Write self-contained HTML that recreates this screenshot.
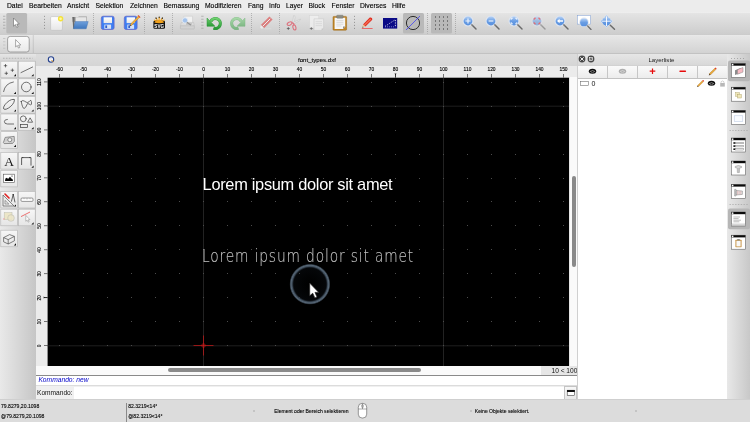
<!DOCTYPE html>
<html lang="de">
<head>
<meta charset="utf-8">
<title>font_types.dxf</title>
<style>
*{box-sizing:border-box;margin:0;padding:0}
html,body{width:750px;height:422px;overflow:hidden;background:#dcdcdc;font-family:"Liberation Sans",sans-serif;-webkit-text-size-adjust:none}
#app{will-change:transform;position:absolute;left:0;top:0;width:750px;height:422px;overflow:hidden;background:#d8d8d8}
.a{position:absolute}
#menubar{position:absolute;left:0;top:0;width:750px;height:12px;background:#ececec}
#menubar span{position:absolute;top:1.3px;font-size:6.75px;line-height:9px;color:#000;-webkit-text-stroke:0.12px #000;white-space:nowrap}
#tb1{position:absolute;left:0;top:12px;width:750px;height:23px;background:linear-gradient(#f6f6f6 0,#e5e5e5 1px,#e3e3e3 2px,#cdcdcd 22px,#cacaca 23px)}
#tb2{position:absolute;left:0;top:35px;width:750px;height:18px;background:linear-gradient(#eaeaea 0,#e6e6e6 1px,#d4d4d4 17px,#d2d2d2 18px)}
#tbline{position:absolute;left:0;top:53px;width:750px;height:1px;background:#c2c2c2}
#left{position:absolute;left:0;top:54px;width:36px;height:346px;background:linear-gradient(90deg,#e9e9e9,#c6c6c6)}
#lefthandle{position:absolute;left:0;top:54px;width:36px;height:7px;background:linear-gradient(#e6e6e6,#d4d4d4)}
.tb{position:absolute;width:16.5px;height:16.5px;background:linear-gradient(#f6f6f6,#e6e6e6);border:0.5px solid #bdbdbd}
#ctitle{position:absolute;left:36px;top:54px;width:541px;height:11.5px;background:linear-gradient(#dcdcdc,#d5d5d5)}
#ctitle span{position:absolute;left:262px;top:2px;font-size:6.1px;line-height:7px;color:#000;-webkit-text-stroke:0.1px #000;white-space:nowrap}
#rulert{position:absolute;left:36px;top:65.5px;width:541px;height:12px;background:#ebebeb}
#rulerl{position:absolute;left:36px;top:77px;width:12px;height:298px;background:#ebebeb}
#canvas{position:absolute;left:47.5px;top:77.5px;width:521.5px;height:288.5px;background:#000;overflow:hidden}
.rt{position:absolute;top:1.2px;width:24px;margin-left:-12px;text-align:center;font-size:4.9px;line-height:6px;color:#000;-webkit-text-stroke:0.12px #000;white-space:nowrap}
.rl{position:absolute;left:0.5px;width:6px;height:16px;margin-top:-8px;font-size:5.3px;line-height:6px;color:#222;white-space:nowrap;writing-mode:vertical-rl;transform:rotate(180deg);text-align:center}
#vs{position:absolute;left:569px;top:77px;width:8px;height:289px;background:#fafafa;border-left:0.5px solid #e4e4e4}
#hs{position:absolute;left:36px;top:366px;width:541px;height:8.5px;background:#fafafa}
#cmdline1{position:absolute;left:36px;top:374.5px;width:541px;height:11px;background:#fff;border-top:1px solid #8a8a8a}
#cmdline1 span{position:absolute;left:2.4px;top:0.4px;font-size:6.7px;line-height:8px;color:#0000c8;font-style:italic;white-space:nowrap}
#cmdline2{position:absolute;left:36px;top:385px;width:541px;height:14px;background:#f0f0f0;border-top:1px solid #dcdcdc}
#status{position:absolute;left:0;top:399px;width:750px;height:23px;background:#dcdcdc;border-top:1px solid #cfcfcf}
.st{position:absolute;font-size:5.1px;line-height:6px;color:#000;-webkit-text-stroke:0.1px #000;white-space:nowrap}
#layer{position:absolute;left:577px;top:54px;width:150px;height:346px;background:#fff;border-left:1px solid #d0d0d0}
#ltitle{position:absolute;left:0;top:0;width:150px;height:11px;background:linear-gradient(#e6e6e6,#d8d8d8)}
#ltitle span{position:absolute;left:70.4px;top:1.7px;font-size:6.1px;line-height:8px;color:#222}
#lbtns{position:absolute;left:0;top:11px;width:150px;height:14px;background:linear-gradient(#fafafa,#ececec);border-top:1px solid #d2d2d2;border-bottom:1px solid #c2c2c2}
.lsep{position:absolute;top:0;width:1px;height:12px;background:#c6c6c6}
#right{position:absolute;left:727px;top:54px;width:23px;height:346px;background:linear-gradient(90deg,#e8e8e8,#c8c8c8)}
.hd{position:absolute;background:#a8a8a8;width:2.5px;height:0.8px}
.dot{position:absolute;width:1px;border-left:1px dotted #555}
.sel{position:absolute;background:#bababa;border-radius:1.5px}
svg{position:absolute;overflow:visible}
</style>
</head>
<body>
<div id="app">
<div id="menubar"><span style="left:7px">Datei</span><span style="left:29px">Bearbeiten</span><span style="left:67px">Ansicht</span><span style="left:95.6px">Selektion</span><span style="left:130px">Zeichnen</span><span style="left:163.6px">Bemassung</span><span style="left:205px">Modifizieren</span><span style="left:248px">Fang</span><span style="left:269px">Info</span><span style="left:286px">Layer</span><span style="left:308.6px">Block</span><span style="left:331.6px">Fenster</span><span style="left:360px">Diverses</span><span style="left:392px">Hilfe</span></div>
<div id="tb1"></div><div id="tb2"></div><div id="tbline"></div>
<svg class="a" style="left:0;top:0" width="750" height="54" viewBox="0 0 750 54">
<defs>
<linearGradient id="gBlue" x1="0" y1="0" x2="0" y2="1"><stop offset="0" stop-color="#b4d0f4"/><stop offset="0.5" stop-color="#6a9ee4"/><stop offset="1" stop-color="#5890de"/></linearGradient>
<linearGradient id="gFold" x1="0" y1="0" x2="0" y2="1"><stop offset="0" stop-color="#6fa0dc"/><stop offset="1" stop-color="#3d76be"/></linearGradient>
<linearGradient id="gGreen" x1="0" y1="0" x2="0" y2="1"><stop offset="0" stop-color="#6ed06e"/><stop offset="1" stop-color="#2a9a38"/></linearGradient>
<linearGradient id="gPage" x1="0" y1="0" x2="0" y2="1"><stop offset="0" stop-color="#ffffff"/><stop offset="1" stop-color="#e6e6e6"/></linearGradient>
<linearGradient id="gBtn" x1="0" y1="0" x2="0" y2="1"><stop offset="0" stop-color="#fbfbfb"/><stop offset="1" stop-color="#e9e9e9"/></linearGradient>
<g id="lens"><circle cx="0" cy="0" r="5.5" fill="#dde5f0" opacity="0.95"/><circle cx="0" cy="0" r="4.4" fill="url(#gBlue)"/><path d="M4 4 L8 8" stroke="#6a6a6a" stroke-width="1.45" stroke-linecap="round"/><path d="M3.2 3.2 L4.4 4.4" stroke="#9a9a9a" stroke-width="1.2"/></g>
<g id="arrowcur"><path d="M0 0 L0 8.2 L1.9 6.5 L3.2 9.4 L4.6 8.8 L3.3 6 L5.8 6 Z" fill="#fff" stroke="#666" stroke-width="0.6" stroke-linejoin="round"/></g>
</defs>
<rect x="3" y="15.799999999999999" width="2.4" height="0.8" fill="#a6a6a6"/><rect x="3" y="18.8" width="2.4" height="0.8" fill="#a6a6a6"/><rect x="3" y="21.8" width="2.4" height="0.8" fill="#a6a6a6"/><rect x="3" y="24.8" width="2.4" height="0.8" fill="#a6a6a6"/><rect x="3" y="27.8" width="2.4" height="0.8" fill="#a6a6a6"/><rect x="6.3" y="13" width="20.8" height="20.5" rx="1.5" fill="#b9b9b9"/><use href="#arrowcur" x="13.5" y="18"/><circle cx="44.5" cy="16.3" r="0.45" fill="#4a4a4a"/><circle cx="44.5" cy="19.3" r="0.45" fill="#4a4a4a"/><circle cx="44.5" cy="22.3" r="0.45" fill="#4a4a4a"/><circle cx="44.5" cy="25.3" r="0.45" fill="#4a4a4a"/><circle cx="44.5" cy="28.3" r="0.45" fill="#4a4a4a"/><rect x="50.6" y="16.6" width="11.8" height="13.8" rx="1.2" fill="url(#gPage)" stroke="#bcbcbc" stroke-width="0.6"/><circle cx="60.6" cy="18.8" r="2.7" fill="#f4e23a"/><circle cx="60.6" cy="18.8" r="1.3" fill="#fff7a0"/><path d="M72.6 17 L78 17 L79 16.4 L86.8 16.4 L86.8 22 L72.6 22 Z" fill="#9a9a9a"/><path d="M75.6 17.2 L86.3 17.2 L86.3 22 L75.6 22 Z" fill="#e6e6e6"/><path d="M72.4 17 L74.4 17 L74.6 28.6 L73.2 28.6 Z" fill="#6a6a6a"/><path d="M75.2 21.6 L88.2 21.6 L86.2 28.8 L73.4 28.8 Z" fill="url(#gFold)" stroke="#3b6cae" stroke-width="0.4"/><line x1="93.5" y1="13" x2="93.5" y2="33.5" stroke="#8a8a8a" stroke-width="0.55" stroke-dasharray="1 1"/><rect x="101.3" y="16.2" width="12.8" height="13.3" rx="1.8" fill="#3d7df2" stroke="#6464c4" stroke-width="0.7"/><rect x="103.6" y="17.3" width="8.4" height="5.8" fill="url(#gPage)"/><rect x="104.3" y="24.6" width="6.8" height="4.2" fill="#d8e2f4"/><rect x="105.3" y="25.4" width="1.8" height="2.6" fill="#2f5fd0"/><rect x="124.3" y="16.2" width="12.8" height="13.3" rx="1.8" fill="#3d7df2" stroke="#6464c4" stroke-width="0.7"/><rect x="126.6" y="17.3" width="8.4" height="5.8" fill="url(#gPage)"/><rect x="127.3" y="24.6" width="6.8" height="4.2" fill="#d8e2f4"/><rect x="128.3" y="25.4" width="1.8" height="2.6" fill="#2f5fd0"/><path d="M138.6 15.8 L139.8 17 L131.4 25.6 L130.2 24.4 Z" fill="#f2b23a" stroke="#b06a14" stroke-width="0.4"/><path d="M130.2 24.4 L131.4 25.6 L129.4 26.4 Z" fill="#444"/><path d="M138 15.4 L140.2 17.6" stroke="#e05a3a" stroke-width="1.1"/><line x1="144.5" y1="13" x2="144.5" y2="33.5" stroke="#8a8a8a" stroke-width="0.55" stroke-dasharray="1 1"/><path d="M153.4 22 Q153.4 20.4 155 20.4 L163.4 20.4 Q165 20.4 165 22 L165 27.6 Q165 28.8 163.6 28.8 L154.8 28.8 Q153.4 28.8 153.4 27.6 Z" fill="#101010"/><path d="M154.2 22.6 Q159.2 16.6 164.2 22.6 Q159.2 24 154.2 22.6Z" fill="#f2a21c"/><path d="M159.2 17.4 L159.2 19 M156.2 18.4 L157 19.6 M162.2 18.4 L161.4 19.6 M154.4 20.2 L155.6 21 M164 20.2 L162.8 21" stroke="#f2a21c" stroke-width="1.2" stroke-linecap="round"/><path d="M159.2 17 L159.2 17.3 M156 18 L156.2 18.3 M162.4 18 L162.2 18.3" stroke="#222" stroke-width="1.2" stroke-linecap="round"/><text x="159.2" y="28" font-family="Liberation Sans, sans-serif" font-weight="bold" font-size="4.6" fill="#fff" text-anchor="middle">SVG</text><line x1="172.5" y1="13" x2="172.5" y2="33.5" stroke="#8a8a8a" stroke-width="0.55" stroke-dasharray="1 1"/><g opacity="0.9"><path d="M183.8 16.2 L192.6 16.2 L192.6 23 L183.8 23 Z" fill="#f4f4f4" stroke="#c0c0c0" stroke-width="0.5"/><path d="M181.4 22.4 L193.6 22.4 L194.4 26 L180.4 26 Z" fill="#dcdcdc" stroke="#b0b0b0" stroke-width="0.4"/><path d="M186 24 L192 24" stroke="#9a9a9a" stroke-width="0.7"/><rect x="180.4" y="25.8" width="14" height="3.2" rx="0.6" fill="#d2d2d2" stroke="#a8a8a8" stroke-width="0.4"/><circle cx="185" cy="20.4" r="2.7" fill="#9cc0ee" stroke="#e4ecf6" stroke-width="0.9"/><path d="M187.2 22.4 L190.4 24.8" stroke="#8c8c8c" stroke-width="1.2" stroke-linecap="round"/></g><rect x="201.2" y="15.799999999999999" width="2.4" height="0.8" fill="#a6a6a6"/><rect x="201.2" y="18.8" width="2.4" height="0.8" fill="#a6a6a6"/><rect x="201.2" y="21.8" width="2.4" height="0.8" fill="#a6a6a6"/><rect x="201.2" y="24.8" width="2.4" height="0.8" fill="#a6a6a6"/><rect x="201.2" y="27.8" width="2.4" height="0.8" fill="#a6a6a6"/><g transform="" opacity="1.0"><path d="M210.8 21.4 A5 5 0 1 1 213.6 28.2" fill="none" stroke="#2c9638" stroke-width="3.1"/><path d="M210.8 21.4 A5 5 0 1 1 213.6 28.2" fill="none" stroke="url(#gGreen)" stroke-width="2.3"/><path d="M207 18 L207 26.3 L215 26.3 Z" fill="url(#gGreen)" stroke="#2c9638" stroke-width="0.5" stroke-linejoin="round"/></g><g transform="translate(452 0) scale(-1 1)" opacity="0.5"><path d="M210.8 21.4 A5 5 0 1 1 213.6 28.2" fill="none" stroke="#2c9638" stroke-width="3.1"/><path d="M210.8 21.4 A5 5 0 1 1 213.6 28.2" fill="none" stroke="url(#gGreen)" stroke-width="2.3"/><path d="M207 18 L207 26.3 L215 26.3 Z" fill="url(#gGreen)" stroke="#2c9638" stroke-width="0.5" stroke-linejoin="round"/></g><line x1="251.5" y1="13" x2="251.5" y2="33.5" stroke="#8a8a8a" stroke-width="0.55" stroke-dasharray="1 1"/><g opacity="0.62"><path d="M269.4 16.4 L272.6 19.6 L264 28.2 L260.8 25 Z" fill="#dc4848"/><path d="M270.2 18.8 L262.6 26.4" stroke="#fff" stroke-width="1"/><path d="M260.8 25 L264 28.2 L261.6 29 L260 27.4 Z" fill="#fafafa" stroke="#d0d0d0" stroke-width="0.3"/><path d="M264.6 28.8 L271.4 28.8" stroke="#e4e4e4" stroke-width="0.8"/></g><line x1="279.5" y1="13" x2="279.5" y2="33.5" stroke="#8a8a8a" stroke-width="0.55" stroke-dasharray="1 1"/><g opacity="0.62"><path d="M293.6 15.6 Q295.2 15 295 17.6 L294 24 L292.6 22.8 Z" fill="#f4f4f4" stroke="#aaa" stroke-width="0.5"/><path d="M300.4 19 Q300.8 20.4 299 21 L293.4 24 L293 22.6 Z" fill="#f4f4f4" stroke="#aaa" stroke-width="0.5"/><ellipse cx="289.6" cy="23.6" rx="2.6" ry="1.5" transform="rotate(-28 289.6 23.6)" fill="none" stroke="#e0364a" stroke-width="1.1"/><ellipse cx="294.4" cy="27.4" rx="1.5" ry="2.6" transform="rotate(-12 294.4 27.4)" fill="none" stroke="#e0364a" stroke-width="1.1"/><path d="M291.8 22.8 L293.6 23.4 L294 25" stroke="#e0364a" stroke-width="1.1" fill="none"/></g><path d="M286.8 28.5 L289.8 28.5 M288.3 27 L288.3 30" stroke="#444" stroke-width="0.6"/><g opacity="0.7"><rect x="309.6" y="15.6" width="9.2" height="12.4" fill="#f4f4f4" stroke="#d0d0d0" stroke-width="0.5"/><path d="M314 18.8 L323.6 18.8 L323.6 28.4 L321.6 30.4 L314 30.4 Z" fill="#f2f2f2" stroke="#bdbdbd" stroke-width="0.5"/><path d="M315.6 21.6 L322 21.6 M315.6 23.6 L322 23.6 M315.6 25.6 L322 25.6" stroke="#d4d4d4" stroke-width="0.7"/><path d="M321.6 30.4 L321.6 28.4 L323.6 28.4 Z" fill="#bdbdbd"/></g><path d="M309.8 28.5 L312.8 28.5 M311.3 27 L311.3 30" stroke="#555" stroke-width="0.6"/><rect x="333" y="16.4" width="13.6" height="13.8" rx="0.8" fill="#c08628" stroke="#9a6410" stroke-width="0.5"/><path d="M334.6 17.8 L345.2 17.8 L345.2 26.6 L343 29 L334.6 29 Z" fill="#f6f6f6"/><path d="M336.4 20.6 L343.4 20.6 M336.4 22.4 L343.4 22.4 M336.4 24.2 L343.4 24.2 M336.4 26 L341.4 26" stroke="#d0d0d0" stroke-width="0.7"/><path d="M343 29 L343 26.6 L345.2 26.6 Z" fill="#8e8e8e"/><rect x="336.6" y="15.2" width="6.6" height="3" rx="0.8" fill="#8c8c84" stroke="#6e6e66" stroke-width="0.4"/><circle cx="354.5" cy="16.3" r="0.45" fill="#4a4a4a"/><circle cx="354.5" cy="19.3" r="0.45" fill="#4a4a4a"/><circle cx="354.5" cy="22.3" r="0.45" fill="#4a4a4a"/><circle cx="354.5" cy="25.3" r="0.45" fill="#4a4a4a"/><circle cx="354.5" cy="28.3" r="0.45" fill="#4a4a4a"/><path d="M369.8 17.6 Q371 17 372 18.2 Q372.6 19.2 372 20 L365.4 26.6 L363 24.4 Z" fill="#e0281c"/><path d="M370.2 18.4 L371.4 19.4 L364.6 26 L363.6 25 Z" fill="#f26a50"/><path d="M363 24.4 L365.4 26.6 L362.2 27.8 Z" fill="#e8c89a"/><path d="M362.8 26.6 L363.6 27.3 L362.2 27.8Z" fill="#333"/><path d="M361.8 28.5 L372.6 28.5" stroke="#f03c3c" stroke-width="0.7"/><rect x="383" y="18" width="14.2" height="10.6" fill="#0a0a86"/><path d="M385 26.4 L395.4 19.6" stroke="#fff" stroke-width="0.7" stroke-dasharray="1.3 1.2"/><path d="M385 26.8 L395.4 26.8" stroke="#9a9ad8" stroke-width="0.7" stroke-dasharray="1 1"/><path d="M395.4 20 L395.4 26.8" stroke="#fff" stroke-width="0.8" stroke-dasharray="1.2 1.2"/><rect x="403" y="13" width="21" height="20.5" rx="1.5" fill="#b9b9b9"/><circle cx="413" cy="23" r="6.6" fill="none" stroke="#0a0a0a" stroke-width="0.8"/><path d="M406 30 L420 16" stroke="#3434ff" stroke-width="0.7"/><line x1="427.5" y1="13" x2="427.5" y2="33.5" stroke="#8a8a8a" stroke-width="0.55" stroke-dasharray="1 1"/><rect x="431" y="13" width="21" height="20.5" rx="1.5" fill="#b9b9b9"/><rect x="435.1" y="16" width="0.8" height="2" fill="#666"/><rect x="435.1" y="20" width="0.8" height="2" fill="#666"/><rect x="435.1" y="24" width="0.8" height="2" fill="#666"/><rect x="435.1" y="28" width="0.8" height="2" fill="#666"/><rect x="439.1" y="16" width="0.8" height="2" fill="#666"/><rect x="439.1" y="20" width="0.8" height="2" fill="#666"/><rect x="439.1" y="24" width="0.8" height="2" fill="#666"/><rect x="439.1" y="28" width="0.8" height="2" fill="#666"/><rect x="443.1" y="16" width="0.8" height="2" fill="#666"/><rect x="443.1" y="20" width="0.8" height="2" fill="#666"/><rect x="443.1" y="24" width="0.8" height="2" fill="#666"/><rect x="443.1" y="28" width="0.8" height="2" fill="#666"/><rect x="447.1" y="16" width="0.8" height="2" fill="#666"/><rect x="447.1" y="20" width="0.8" height="2" fill="#666"/><rect x="447.1" y="24" width="0.8" height="2" fill="#666"/><rect x="447.1" y="28" width="0.8" height="2" fill="#666"/><line x1="455.5" y1="13" x2="455.5" y2="33.5" stroke="#8a8a8a" stroke-width="0.55" stroke-dasharray="1 1"/><use href="#lens" x="468" y="21"/><path d="M465.4 21 L470.6 21 M468 18.4 L468 23.6" stroke="#fff" stroke-width="1.1" opacity="0.9"/><use href="#lens" x="491" y="21"/><path d="M488.6 21 L493.4 21" stroke="#fff" stroke-width="1.2" opacity="0.85"/><use href="#lens" x="514" y="21"/><path d="M511.2 19.8 L511.2 18.2 L512.8 18.2 M515.2 18.2 L516.8 18.2 L516.8 19.8 M516.8 22.2 L516.8 23.8 L515.2 23.8 M512.8 23.8 L511.2 23.8 L511.2 22.2" stroke="#fff" stroke-width="0.9" fill="none"/><g opacity="0.55"><use href="#lens" x="537" y="21"/></g><path d="M534.2 19.8 L534.2 18.2 L535.8 18.2 M538.2 18.2 L539.8 18.2 L539.8 19.8 M539.8 22.2 L539.8 23.8 L538.2 23.8 M535.8 23.8 L534.2 23.8 L534.2 22.2" stroke="#f05a5a" stroke-width="0.9" fill="none"/><use href="#lens" x="560" y="21"/><path d="M557 21 L559.6 18.8 L559.6 20.2 L563 20.2 L563 21.8 L559.6 21.8 L559.6 23.2 Z" fill="#fff"/><rect x="577.3" y="15.3" width="13.2" height="8.8" fill="#fff" stroke="#7a9ad0" stroke-width="0.5"/><g transform="translate(584 22.4) scale(0.88)"><use href="#lens"/></g><g transform="translate(606.5 21.2)"><path d="M0 -6.6 L2 -4.4 L4.4 -2 L6.6 0 L4.4 2 L2 4.4 L0 6.6 L-2 4.4 L-4.4 2 L-6.6 0 L-4.4 -2 L-2 -4.4 Z" fill="#dde5f0"/><circle cx="0" cy="0" r="4.3" fill="url(#gBlue)"/><path d="M0 -5.8 L1.5 -4 L-1.5 -4 Z M0 5.8 L1.5 4 L-1.5 4 Z M-5.8 0 L-4 -1.5 L-4 1.5 Z M5.8 0 L4 -1.5 L4 1.5 Z" fill="#6a9ee4"/><path d="M-5 0 L5 0 M0 -5 L0 5" stroke="#fff" stroke-width="0.9"/><path d="M3.8 4 L8 8" stroke="#6a6a6a" stroke-width="1.45" stroke-linecap="round"/></g><rect x="3" y="38.2" width="2.4" height="0.8" fill="#c0c0c0"/><rect x="3" y="41.400000000000006" width="2.4" height="0.8" fill="#c0c0c0"/><rect x="3" y="44.6" width="2.4" height="0.8" fill="#c0c0c0"/><rect x="3" y="47.800000000000004" width="2.4" height="0.8" fill="#c0c0c0"/><rect x="7.6" y="36.4" width="21.6" height="15.6" rx="2.6" fill="url(#gBtn)" stroke="#707070" stroke-width="0.6"/><g transform="translate(15.6 39.6) scale(0.9)"><use href="#arrowcur"/></g><line x1="33.3" y1="35.5" x2="33.3" y2="52.5" stroke="#8a8a8a" stroke-width="0.55" stroke-dasharray="1 1"/></svg>
<div id="left"></div><div id="lefthandle"></div>
<svg class="a" style="left:0;top:0" width="40" height="260" viewBox="0 0 40 260">
<defs><linearGradient id="gTb" x1="0" y1="0" x2="0" y2="1"><stop offset="0" stop-color="#f7f7f7"/><stop offset="1" stop-color="#e5e5e5"/></linearGradient></defs><rect x="0.8" y="61.2" width="16.6" height="16.6" fill="url(#gTb)" stroke="#b4b4b4" stroke-width="0.6"/><rect x="18.6" y="61.2" width="16.6" height="16.6" fill="url(#gTb)" stroke="#b4b4b4" stroke-width="0.6"/><rect x="0.8" y="78.8" width="16.6" height="16.6" fill="url(#gTb)" stroke="#b4b4b4" stroke-width="0.6"/><rect x="18.6" y="78.8" width="16.6" height="16.6" fill="url(#gTb)" stroke="#b4b4b4" stroke-width="0.6"/><rect x="0.8" y="96.5" width="16.6" height="16.6" fill="url(#gTb)" stroke="#b4b4b4" stroke-width="0.6"/><rect x="18.6" y="96.5" width="16.6" height="16.6" fill="url(#gTb)" stroke="#b4b4b4" stroke-width="0.6"/><rect x="0.8" y="114" width="16.6" height="16.6" fill="url(#gTb)" stroke="#b4b4b4" stroke-width="0.6"/><rect x="18.6" y="114" width="16.6" height="16.6" fill="url(#gTb)" stroke="#b4b4b4" stroke-width="0.6"/><rect x="0.8" y="131.7" width="16.6" height="16.6" fill="url(#gTb)" stroke="#b4b4b4" stroke-width="0.6"/><rect x="0.8" y="152.5" width="16.6" height="16.6" fill="url(#gTb)" stroke="#b4b4b4" stroke-width="0.6"/><rect x="18.6" y="152.5" width="16.6" height="16.6" fill="url(#gTb)" stroke="#b4b4b4" stroke-width="0.6"/><rect x="0.8" y="170.3" width="16.6" height="16.6" fill="url(#gTb)" stroke="#b4b4b4" stroke-width="0.6"/><rect x="0.8" y="191.4" width="16.6" height="16.6" fill="url(#gTb)" stroke="#b4b4b4" stroke-width="0.6"/><rect x="18.6" y="191.4" width="16.6" height="16.6" fill="url(#gTb)" stroke="#b4b4b4" stroke-width="0.6"/><rect x="0.8" y="209.2" width="16.6" height="16.6" fill="url(#gTb)" stroke="#b4b4b4" stroke-width="0.6"/><rect x="18.6" y="209.2" width="16.6" height="16.6" fill="url(#gTb)" stroke="#b4b4b4" stroke-width="0.6"/><rect x="0.8" y="230.2" width="16.6" height="16.6" fill="url(#gTb)" stroke="#b4b4b4" stroke-width="0.6"/><path d="M3 58.3 L32.5 58.3" stroke="#ababab" stroke-width="0.8" stroke-dasharray="1.6 1.3"/><path d="M3.8 65.7 L7.2 65.7 M5.5 64.0 L5.5 67.4" stroke="#222" stroke-width="0.6"/><path d="M10.700000000000001 70.2 L14.1 70.2 M12.4 68.5 L12.4 71.9" stroke="#222" stroke-width="0.6"/><path d="M4.6 73.3 L8.0 73.3 M6.3 71.6 L6.3 75.0" stroke="#222" stroke-width="0.6"/><path d="M16 74.0 L16 76.2 L13.8 76.2 Z" fill="#111"/><path d="M21 72.6 L32.6 67" stroke="#3a3a3a" stroke-width="0.7" fill="none" stroke-linecap="round"/><path d="M33.6 74.0 L33.6 76.2 L31.400000000000002 76.2 Z" fill="#111"/><path d="M3.6 91.6 Q5 83.4 13.4 82" stroke="#3a3a3a" stroke-width="0.7" fill="none" stroke-linecap="round"/><path d="M16 91.8 L16 94 L13.8 94 Z" fill="#111"/><circle cx="26.3" cy="87" r="4.8" stroke="#3a3a3a" stroke-width="0.7" fill="none" stroke-linecap="round"/><path d="M33.6 91.8 L33.6 94 L31.400000000000002 94 Z" fill="#111"/><ellipse cx="9" cy="104.3" rx="7" ry="2.7" transform="rotate(-42 9 104.3)" stroke="#3a3a3a" stroke-width="0.7" fill="none" stroke-linecap="round"/><path d="M16 109.39999999999999 L16 111.6 L13.8 111.6 Z" fill="#111"/><path d="M21.2 101.4 Q22.6 99.6 24.6 101.2 Q28 104 30 100.6 Q31 99.6 31.4 101.6 Q32 105.4 30.6 104.8 Q29 104 27.6 103.4 Q25.6 108.4 24 108.6 Q22.4 108 21.2 101.4 Z" stroke="#3a3a3a" stroke-width="0.7" fill="none" stroke-linecap="round"/><path d="M33.6 109.39999999999999 L33.6 111.6 L31.400000000000002 111.6 Z" fill="#111"/><path d="M7.4 119.4 Q4.4 119.4 4.4 121.6 Q4.4 124 7.4 124 L13.6 124" stroke="#3a3a3a" stroke-width="0.7" fill="none" stroke-linecap="round"/><path d="M16 126.99999999999999 L16 129.2 L13.8 129.2 Z" fill="#111"/><circle cx="23.3" cy="118.8" r="2.9" stroke="#3a3a3a" stroke-width="0.7" fill="none" stroke-linecap="round"/><path d="M28 122.2 L32.6 122.2 L30.3 118.2 Z" stroke="#3a3a3a" stroke-width="0.7" fill="none" stroke-linecap="round"/><rect x="20.5" y="124.6" width="7" height="3" stroke="#3a3a3a" stroke-width="0.7" fill="none" stroke-linecap="round"/><path d="M33.6 126.99999999999999 L33.6 129.2 L31.400000000000002 129.2 Z" fill="#111"/><path d="M3.4 142.6 L5.2 137.4 L14.2 136.4 L14.4 141.2 L12.6 143.4 L4.2 143.6 Z" fill="#d8d8d8" stroke="#555" stroke-width="0.6"/><path d="M4.4 141.4 L13.6 138 M4.6 139.6 L13.6 140 M6 137.8 L12 142.8" stroke="#8a8a8a" stroke-width="0.4" stroke-dasharray="0.5 0.6"/><circle cx="9.8" cy="139.8" r="2" fill="#f2f2f2" stroke="#555" stroke-width="0.6"/><path d="M16 144.8 L16 147 L13.8 147 Z" fill="#111"/><path d="M21.6 157.6 L31 157.6 M21.6 157.6 L21.6 165 M31 157.6 L31 165.6" stroke="#222" stroke-width="0.7" fill="none"/><path d="M22.4 157 L23.6 157.6 L22.4 158.2Z M30.2 157 L29 157.6 L30.2 158.2Z" fill="#222"/><path d="M33.6 165.60000000000002 L33.6 167.8 L31.400000000000002 167.8 Z" fill="#111"/><rect x="3.6" y="174.2" width="10.8" height="8.2" fill="#fff" stroke="#555" stroke-width="0.6"/><path d="M5 181 L5.4 178.6 L7 177.8 L8 179 L10 176.8 L11.4 178.6 L12.6 179.2 L13 181 Z" fill="#0a0a0a"/><circle cx="12" cy="176" r="0.6" fill="#0a0a0a"/><path d="M3 195 L3 206 L14 206 Z" fill="#ececec" stroke="#444" stroke-width="0.6"/><path d="M5 200.4 L5 204 L8.8 204 Z" fill="none" stroke="#555" stroke-width="0.5"/><path d="M5 194 L9 198" stroke="#e02020" stroke-width="1.6" stroke-linecap="round"/><path d="M13.2 194.4 L11.4 201.6 M13.2 194.4 L15 202.4" stroke="#222" stroke-width="0.7"/><circle cx="13.2" cy="194.6" r="0.7" fill="#222"/><path d="M16 204.4 L16 206.6 L13.8 206.6 Z" fill="#111"/><rect x="21" y="198" width="12" height="3.4" rx="1" fill="#fff" stroke="#4a4a4a" stroke-width="0.55"/><path d="M24 198 L24 199.2 M27 198 L27 199.6 M30 198 L30 199.2" stroke="#777" stroke-width="0.4"/><rect x="4.2" y="212.6" width="7.8" height="7" fill="#ece6c8" stroke="#bdbdb0" stroke-width="0.5"/><circle cx="11" cy="218" r="3.3" fill="#ece6c8" fill-opacity="0.8" stroke="#b4b4a8" stroke-width="0.5"/><path d="M3 219 L4.6 219" stroke="#f08a8a" stroke-width="0.8"/><path d="M21 216.6 L30 212" stroke="#e83a3a" stroke-width="0.7"/><g transform="translate(25.8 215.4) scale(0.72)"><path d="M0 0 L0 8.2 L1.9 6.5 L3.2 9.4 L4.6 8.8 L3.3 6 L5.8 6 Z" fill="#fff" stroke="#888" stroke-width="0.7" stroke-linejoin="round"/></g><path d="M33.6 222.20000000000002 L33.6 224.4 L31.400000000000002 224.4 Z" fill="#111"/><path d="M3.6 237.6 L9.6 234.6 L14.4 236.4 L14.4 240.8 L8.2 244 L3.6 241.8 Z M3.6 237.6 L8.2 239.6 L14.4 236.4 M8.2 239.6 L8.2 244" stroke="#333" stroke-width="0.6" fill="none" stroke-linejoin="round"/><path d="M16 243.20000000000002 L16 245.4 L13.8 245.4 Z" fill="#111"/></svg>
<div class="a" style="left:3.6px;top:153.6px;width:11px;text-align:center;font-family:'Liberation Serif',serif;font-size:13.5px;line-height:15px;color:#161616">A</div>
<div id="ctitle"><span>font_types.dxf</span></div>
<div id="rulert"><div class="rt" style="left:23.5px">-60</div><div class="rt" style="left:47.5px">-50</div><div class="rt" style="left:71.5px">-40</div><div class="rt" style="left:95.5px">-30</div><div class="rt" style="left:119.5px">-20</div><div class="rt" style="left:143.5px">-10</div><div class="rt" style="left:167.5px">0</div><div class="rt" style="left:191.5px">10</div><div class="rt" style="left:215.5px">20</div><div class="rt" style="left:239.5px">30</div><div class="rt" style="left:263.5px">40</div><div class="rt" style="left:287.5px">50</div><div class="rt" style="left:311.5px">60</div><div class="rt" style="left:335.5px">70</div><div class="rt" style="left:359.5px">80</div><div class="rt" style="left:383.5px">90</div><div class="rt" style="left:407.5px">100</div><div class="rt" style="left:431.5px">110</div><div class="rt" style="left:455.5px">120</div><div class="rt" style="left:479.5px">130</div><div class="rt" style="left:503.5px">140</div><div class="rt" style="left:527.5px">150</div></div>
<div id="rulerl"></div>
<svg class="a" style="left:0;top:0" width="750" height="422" viewBox="0 0 750 422">
<defs><clipPath id="cv"><rect x="47.5" y="77.5" width="521.5" height="288.5"/></clipPath><radialGradient id="ring" cx="0.5" cy="0.5" r="0.5"><stop offset="0" stop-color="#0a1018" stop-opacity="0"/><stop offset="0.78" stop-color="#10161e" stop-opacity="0.3"/><stop offset="0.86" stop-color="#3e4c5a"/><stop offset="0.92" stop-color="#586878"/><stop offset="0.96" stop-color="#3a4652" stop-opacity="0.8"/><stop offset="1" stop-color="#1a222a" stop-opacity="0"/></radialGradient></defs>
<rect x="47.6" y="77.7" width="521.4" height="288.4" fill="#000"/><circle cx="51" cy="59.5" r="2.7" fill="#f4f6fc" stroke="#24408c" stroke-width="1.1"/><path d="M51.2 59.8 L53.4 62" stroke="#eaa028" stroke-width="1"/><path d="M49.8 58.6 Q51 57.6 52 58.4" stroke="#c0c8e0" stroke-width="0.5" fill="none"/><text transform="translate(41.2 345.8) rotate(-90)" font-family="Liberation Sans, sans-serif" font-size="4.9" fill="#000" stroke="#000" stroke-width="0.1" text-anchor="middle">0</text><text transform="translate(41.2 321.8) rotate(-90)" font-family="Liberation Sans, sans-serif" font-size="4.9" fill="#000" stroke="#000" stroke-width="0.1" text-anchor="middle">10</text><text transform="translate(41.2 297.9) rotate(-90)" font-family="Liberation Sans, sans-serif" font-size="4.9" fill="#000" stroke="#000" stroke-width="0.1" text-anchor="middle">20</text><text transform="translate(41.2 273.9) rotate(-90)" font-family="Liberation Sans, sans-serif" font-size="4.9" fill="#000" stroke="#000" stroke-width="0.1" text-anchor="middle">30</text><text transform="translate(41.2 250.0) rotate(-90)" font-family="Liberation Sans, sans-serif" font-size="4.9" fill="#000" stroke="#000" stroke-width="0.1" text-anchor="middle">40</text><text transform="translate(41.2 226.0) rotate(-90)" font-family="Liberation Sans, sans-serif" font-size="4.9" fill="#000" stroke="#000" stroke-width="0.1" text-anchor="middle">50</text><text transform="translate(41.2 202.0) rotate(-90)" font-family="Liberation Sans, sans-serif" font-size="4.9" fill="#000" stroke="#000" stroke-width="0.1" text-anchor="middle">60</text><text transform="translate(41.2 178.1) rotate(-90)" font-family="Liberation Sans, sans-serif" font-size="4.9" fill="#000" stroke="#000" stroke-width="0.1" text-anchor="middle">70</text><text transform="translate(41.2 154.1) rotate(-90)" font-family="Liberation Sans, sans-serif" font-size="4.9" fill="#000" stroke="#000" stroke-width="0.1" text-anchor="middle">80</text><text transform="translate(41.2 130.2) rotate(-90)" font-family="Liberation Sans, sans-serif" font-size="4.9" fill="#000" stroke="#000" stroke-width="0.1" text-anchor="middle">90</text><text transform="translate(41.2 106.2) rotate(-90)" font-family="Liberation Sans, sans-serif" font-size="4.9" fill="#000" stroke="#000" stroke-width="0.1" text-anchor="middle">100</text><text transform="translate(41.2 82.2) rotate(-90)" font-family="Liberation Sans, sans-serif" font-size="4.9" fill="#000" stroke="#000" stroke-width="0.1" text-anchor="middle">110</text><path d="M59.5 74 L59.5 77.6" stroke="#222" stroke-width="0.6"/><path d="M83.5 74 L83.5 77.6" stroke="#222" stroke-width="0.6"/><path d="M107.5 74 L107.5 77.6" stroke="#222" stroke-width="0.6"/><path d="M131.5 74 L131.5 77.6" stroke="#222" stroke-width="0.6"/><path d="M155.5 74 L155.5 77.6" stroke="#222" stroke-width="0.6"/><path d="M179.5 74 L179.5 77.6" stroke="#222" stroke-width="0.6"/><path d="M203.5 74 L203.5 77.6" stroke="#222" stroke-width="0.6"/><path d="M227.5 74 L227.5 77.6" stroke="#222" stroke-width="0.6"/><path d="M251.5 74 L251.5 77.6" stroke="#222" stroke-width="0.6"/><path d="M275.5 74 L275.5 77.6" stroke="#222" stroke-width="0.6"/><path d="M299.5 74 L299.5 77.6" stroke="#222" stroke-width="0.6"/><path d="M323.5 74 L323.5 77.6" stroke="#222" stroke-width="0.6"/><path d="M347.5 74 L347.5 77.6" stroke="#222" stroke-width="0.6"/><path d="M371.5 74 L371.5 77.6" stroke="#222" stroke-width="0.6"/><path d="M395.5 74 L395.5 77.6" stroke="#222" stroke-width="0.6"/><path d="M419.5 74 L419.5 77.6" stroke="#222" stroke-width="0.6"/><path d="M443.5 74 L443.5 77.6" stroke="#222" stroke-width="0.6"/><path d="M467.5 74 L467.5 77.6" stroke="#222" stroke-width="0.6"/><path d="M491.5 74 L491.5 77.6" stroke="#222" stroke-width="0.6"/><path d="M515.5 74 L515.5 77.6" stroke="#222" stroke-width="0.6"/><path d="M539.5 74 L539.5 77.6" stroke="#222" stroke-width="0.6"/><path d="M563.5 74 L563.5 77.6" stroke="#222" stroke-width="0.6"/><path d="M44 345.5 L47.6 345.5" stroke="#222" stroke-width="0.6"/><path d="M44 321.5 L47.6 321.5" stroke="#222" stroke-width="0.6"/><path d="M44 297.6 L47.6 297.6" stroke="#222" stroke-width="0.6"/><path d="M44 273.6 L47.6 273.6" stroke="#222" stroke-width="0.6"/><path d="M44 249.7 L47.6 249.7" stroke="#222" stroke-width="0.6"/><path d="M44 225.7 L47.6 225.7" stroke="#222" stroke-width="0.6"/><path d="M44 201.7 L47.6 201.7" stroke="#222" stroke-width="0.6"/><path d="M44 177.8 L47.6 177.8" stroke="#222" stroke-width="0.6"/><path d="M44 153.8 L47.6 153.8" stroke="#222" stroke-width="0.6"/><path d="M44 129.9 L47.6 129.9" stroke="#222" stroke-width="0.6"/><path d="M44 105.9 L47.6 105.9" stroke="#222" stroke-width="0.6"/><path d="M44 81.9 L47.6 81.9" stroke="#222" stroke-width="0.6"/><path d="M394.5 73.6 L396.5 73.6 L395.5 75 Z" fill="#111"/><path d="M395.5 74 L395.5 77.5" stroke="#111" stroke-width="0.6"/><path d="M43.6 296.5 L43.6 298.5 L45 297.5 Z" fill="#111"/><path d="M44 297.5 L47.5 297.5" stroke="#111" stroke-width="0.7"/><g clip-path="url(#cv)"><path d="M203.5 77 L203.5 366" stroke="#303030" stroke-width="0.7"/><path d="M47 345.8 L570 345.8" stroke="#262626" stroke-width="0.8"/><path d="M443.5 77 L443.5 366" stroke="#303030" stroke-width="0.7"/><path d="M47 106.2 L570 106.2" stroke="#262626" stroke-width="0.8"/><path d="M59 345.5H570M59 321.5H570M59 297.5H570M59 273.5H570M59 249.5H570M59 225.5H570M59 201.5H570M59 178.5H570M59 154.5H570M59 130.5H570M59 106.5H570M59 82.5H570" stroke="#4c4c4c" stroke-width="1" stroke-dasharray="1 23" fill="none" shape-rendering="crispEdges"/><path d="M193.5 345.5 L213.5 345.5 M203.5 335.5 L203.5 355.5" stroke="#d01818" stroke-width="0.7"/><circle cx="203.5" cy="345.5" r="1.8" fill="none" stroke="#d01818" stroke-width="0.6"/><text x="202.6" y="189.6" font-family="Liberation Sans, sans-serif" font-size="16.4" fill="#fff" textLength="190" lengthAdjust="spacing">Lorem ipsum dolor sit amet</text><g transform="translate(201.9 262) scale(0.78 1)"><text x="0" y="0" font-family="DejaVu Sans Light, DejaVu Sans, Liberation Sans, sans-serif" font-weight="200" font-size="17.7" fill="#c4c4c4" stroke="#c4c4c4" stroke-width="0.12" textLength="271" lengthAdjust="spacing">Lorem ipsum dolor sit amet</text></g><circle cx="309.9" cy="284.2" r="20.6" fill="url(#ring)"/><g transform="translate(309.7 283.1) scale(1.08)"><path d="M0.6 0.8 L0.6 12.6 L3.4 10.2 L5.4 14.6 L7.6 13.6 L5.6 9.4 L9.2 9.4 Z" fill="#000" opacity="0.5"/><path d="M0 0 L0 11.8 L2.8 9.4 L4.8 13.8 L6.8 12.9 L4.9 8.6 L8.4 8.6 Z" fill="#fff" stroke="#222" stroke-width="0.7" stroke-linejoin="round"/></g></g></svg>
<div id="vs"><div class="a" style="left:1.5px;top:99px;width:4.5px;height:90.5px;border-radius:2.3px;background:#8a8a8a"></div></div>
<div id="hs"><div class="a" style="left:132px;top:1.7px;width:253px;height:4.6px;border-radius:2.3px;background:#8a8a8a"></div><div class="a" style="left:505px;top:0;width:36px;height:8.5px;background:#e6e6e6"></div><span class="a" style="left:515.5px;top:0.6px;font-size:6.6px;line-height:8px;color:#111;white-space:nowrap">10 &lt; 100</span></div>
<div id="layer"><div id="ltitle"><span>Layerliste</span></div><div id="lbtns"><div class="lsep" style="left:28.8px"></div><div class="lsep" style="left:58.8px"></div><div class="lsep" style="left:88.8px"></div><div class="lsep" style="left:118.8px"></div></div><span class="a" style="left:13.6px;top:24.8px;font-size:7px;line-height:9px;color:#111">0</span></div>
<div id="right"></div>
<svg class="a" style="left:0;top:0" width="750" height="260" viewBox="0 0 750 260">
<defs><g id="eye"><ellipse cx="0" cy="0" rx="3.7" ry="2.5" fill="#0a0a0a"/><path d="M-2.6 0.4 Q0 -1.6 2.6 0.4" stroke="#fff" stroke-width="0.5" fill="none"/><path d="M-1.6 0.9 Q0 1.9 1.6 0.9" stroke="#ddd" stroke-width="0.4" fill="none"/></g>
<g id="pen"><path d="M5.4 0.8 L6.6 2 L1.4 7.2 L0.2 6 Z" fill="#e8a838" stroke="#a86c18" stroke-width="0.35"/><path d="M5.4 0.8 L6.2 0 Q7.2 0.2 7.4 1.2 L6.6 2 Z" fill="#e03c2c"/><path d="M0.2 6 L1.4 7.2 L-0.4 7.8 Z" fill="#5a4020"/></g>
<g id="win"><rect x="0" y="0" width="14" height="14" fill="#fff" stroke="#5a5a5a" stroke-width="0.55"/><rect x="0" y="0" width="14" height="2.2" fill="#0a0a0a"/><rect x="0.5" y="0.4" width="1.5" height="1.5" fill="#fff"/></g></defs>
<circle cx="582" cy="59" r="3.4" fill="#484848"/><path d="M580.3 57.3 L583.7 60.7 M583.7 57.3 L580.3 60.7" stroke="#fff" stroke-width="0.9"/><circle cx="591" cy="59" r="3.4" fill="#484848"/><rect x="589.3" y="57.6" width="3.2" height="3" fill="#6a6a6a" stroke="#fff" stroke-width="0.6"/><path d="M590.4 59.8 L591.8 58.4" stroke="#ddd" stroke-width="0.4"/><use href="#eye" x="592.5" y="71.2"/><g opacity="0.3"><use href="#eye" x="622.5" y="71.2"/></g><path d="M649.7 71.2 L655.3 71.2 M652.5 68.4 L652.5 74" stroke="#e60a0a" stroke-width="1.2"/><path d="M680 71.2 L685.4 71.2" stroke="#e60a0a" stroke-width="1.4" stroke-linecap="round"/><use href="#pen" x="709.2" y="67.6"/><rect x="580.4" y="81.5" width="8" height="4" fill="#fff" stroke="#666" stroke-width="0.55"/><g transform="translate(697.4 80) scale(0.9)"><use href="#pen"/></g><use href="#eye" x="711.5" y="83.3"/><rect x="720.2" y="83" width="4.6" height="3.6" fill="#b8b8b8"/><path d="M721 83 L721 81.8 Q722.5 80 724 81.8 L724 83" stroke="#c4c4c4" stroke-width="0.7" fill="none"/><circle cx="731.6" cy="58.5" r="0.45" fill="#7c7c7c"/><circle cx="734.6" cy="58.5" r="0.45" fill="#7c7c7c"/><circle cx="737.6" cy="58.5" r="0.45" fill="#7c7c7c"/><circle cx="740.6" cy="58.5" r="0.45" fill="#7c7c7c"/><circle cx="743.6" cy="58.5" r="0.45" fill="#7c7c7c"/><rect x="728" y="60.6" width="22" height="20.6" rx="2" fill="#b6b6b6"/><rect x="728" y="208.6" width="22" height="20.6" rx="2" fill="#b6b6b6"/><use href="#win" x="731.4" y="63.5"/><use href="#win" x="731.4" y="87.2"/><use href="#win" x="731.4" y="110.4"/><use href="#win" x="731.4" y="138"/><use href="#win" x="731.4" y="161"/><use href="#win" x="731.4" y="184.4"/><use href="#win" x="731.4" y="212"/><use href="#win" x="731.4" y="235.2"/><path d="M729.5 130.5 L749 130.5 M729.5 204.5 L749 204.5" stroke="#a4a4a4" stroke-width="0.7" stroke-dasharray="1.4 1.4"/><path d="M735 70.3 L740.6 67.9 L740.6 72.7 L735 75.1 Z" fill="#8c8c8c"/><path d="M737.4 69.7 L743 67.5 L743 72.1 L737.4 74.3 Z" fill="#f6bcc4" stroke="#7a7a7a" stroke-width="0.45"/><rect x="735.6" y="92.60000000000001" width="3.8" height="3.6" fill="#efe6b8" stroke="#a89c60" stroke-width="0.4"/><rect x="737.6" y="94.4" width="3.8" height="3.6" fill="#efe6b8" stroke="#a89c60" stroke-width="0.4"/><rect x="734.2" y="115.80000000000001" width="8.6" height="5.6" fill="#fafcff" stroke="#b4c4e0" stroke-width="0.5"/><rect x="733.4" y="142.2" width="1.6" height="1.6" fill="#111"/><rect x="735.6" y="142.2" width="8" height="1.6" fill="#fff" stroke="#555" stroke-width="0.4"/><rect x="733.4" y="145.29999999999998" width="1.6" height="1.6" fill="#111"/><rect x="735.6" y="145.29999999999998" width="8" height="1.6" fill="#fff" stroke="#555" stroke-width="0.4"/><rect x="733.4" y="148.39999999999998" width="1.6" height="1.6" fill="#111"/><rect x="735.6" y="148.39999999999998" width="8" height="1.6" fill="#fff" stroke="#555" stroke-width="0.4"/><path d="M735.2 166.4 Q738.4 164.6 741.6 166.4 L741.6 167.6 L739.6 168 L739.4 172.6 L737.4 172.6 L737.2 168 L735.2 167.6 Z" fill="#d8d8d8" stroke="#777" stroke-width="0.4"/><path d="M738.4 168 L738.4 172.4" stroke="#999" stroke-width="0.4"/><path d="M734.6 189.4 L736 189.4 L736 196.0 L734.6 196.0 Z M736 190.4 L742.4 191.0 L742.4 194.4 L736 195.0 Z" fill="#e4e4e4" stroke="#666" stroke-width="0.4"/><path d="M737.6 190.8 L737.6 194.6 M739.2 191.0 L739.2 194.4 M740.8 191.0 L740.8 194.4" stroke="#d88" stroke-width="0.4"/><path d="M733.4 217 L740 217 M733.4 218.6 L738.6 218.6 M733.4 220.2 L741 220.2 M733.4 221.8 L739.4 221.8" stroke="#777" stroke-width="0.5"/><rect x="731.6" y="224" width="13.6" height="1.8" fill="#e8e8e8" stroke="#777" stroke-width="0.3"/><rect x="735.4" y="239.79999999999998" width="6.2" height="7.4" rx="0.4" fill="#c8964a"/><rect x="736.4" y="240.79999999999998" width="4.2" height="5.6" fill="#f8f8f8"/><rect x="737.2" y="239.0" width="2.6" height="1.5" fill="#8c8c84"/></svg>
<div id="cmdline1"><span>Kommando: new</span></div>
<div id="cmdline2"><span class="a" style="left:1px;top:1.6px;font-size:6.6px;line-height:9px;color:#111;white-space:nowrap">Kommando:</span><div class="a" style="left:38px;top:0.5px;width:489.5px;height:12.5px;background:#fff"></div><div class="a" style="left:527.5px;top:0px;width:13.5px;height:13.5px;background:linear-gradient(#f8f8f8,#e8e8e8);border:0.5px solid #c4c4c4"></div><svg class="a" style="left:527.5px;top:0" width="14" height="14" viewBox="0 0 14 14"><rect x="3.2" y="4.2" width="7.4" height="5.2" fill="#fff" stroke="#222" stroke-width="0.5"/><rect x="3" y="4" width="7.8" height="2" fill="#111"/></svg></div>
<div id="status"><span class="st" style="left:1px;top:2.9px">79.8279,20.1098</span><span class="st" style="left:1px;top:12.9px">@79.8279,20.1098</span><div class="a" style="left:126.2px;top:3px;width:0.7px;height:19px;background:#8a8a8a"></div><span class="st" style="left:128.2px;top:2.9px">82.3219&lt;14°</span><span class="st" style="left:128.2px;top:12.9px">@82.3219&lt;14°</span><div class="a" style="left:253.2px;top:10px;width:2px;height:2px;border-radius:1px;background:#bcbcbc"></div><span class="st" style="left:274.2px;top:7.5px;font-size:5.05px">Element oder Bereich selektieren</span><svg class="a" style="left:357px;top:2px" width="12" height="18" viewBox="0 0 12 18"><rect x="1.3" y="1.4" width="8.4" height="14.6" rx="3.8" fill="#fff" stroke="#555" stroke-width="0.6"/><path d="M1.4 7 L9.6 7 M5.5 1.6 L5.5 7" stroke="#555" stroke-width="0.5"/><rect x="4.7" y="2.6" width="1.6" height="3" rx="0.6" fill="#aaa" stroke="#555" stroke-width="0.3"/></svg><div class="a" style="left:470.4px;top:10px;width:2px;height:2px;border-radius:1px;background:#bcbcbc"></div><span class="st" style="left:474.8px;top:7.5px;font-size:5.05px">Keine Objekte selektiert.</span><div class="a" style="left:635.4px;top:10px;width:2px;height:2px;border-radius:1px;background:#bcbcbc"></div></div>
</div>
</body>
</html>
